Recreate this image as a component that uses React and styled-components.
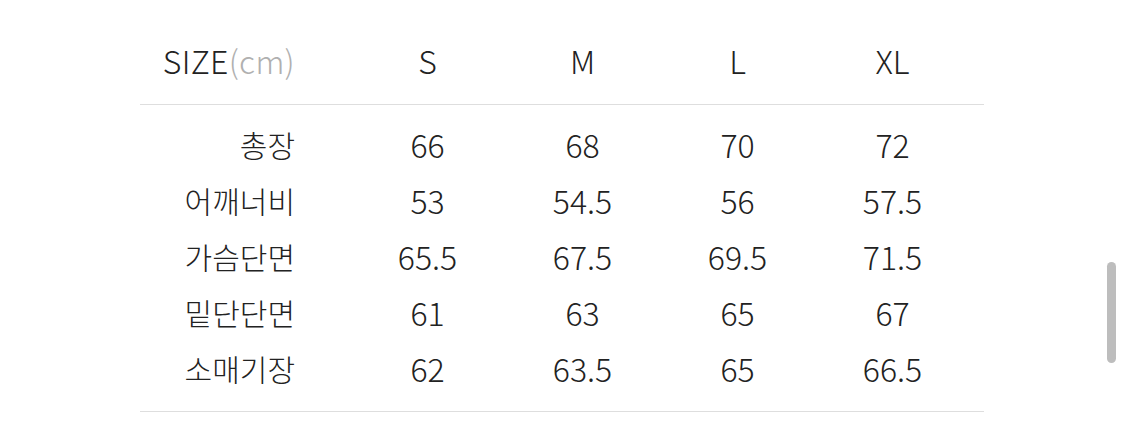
import styled, { createGlobalStyle } from "styled-components"

const GlobalStyle = createGlobalStyle`
    html, body {
        margin: 0;
        padding: 0;
        background: #ffffff;
    }
    body {
        font-family: "Noto Sans CJK KR", "Noto Sans", sans-serif;
        color: #222222;
    }
`

const sizes = ["S", "M", "L", "XL"]

const rows = [
    { label: "총장", values: ["66", "68", "70", "72"] },
    { label: "어깨너비", values: ["53", "54.5", "56", "57.5"] },
    { label: "가슴단면", values: ["65.5", "67.5", "69.5", "71.5"] },
    { label: "밑단단면", values: ["61", "63", "65", "67"] },
    { label: "소매기장", values: ["62", "63.5", "65", "66.5"] },
]

const App = () => {
    return (
        <Page>
            <GlobalStyle />
            <Table>
                <HeaderRow>
                    <LabelCell $head>
                        SIZE<Unit>(cm)</Unit>
                    </LabelCell>
                    {sizes.map(s => <ValueCell key={s}>{s}</ValueCell>)}
                </HeaderRow>
                <Body>
                    {rows.map(row => (
                        <Row key={row.label}>
                            <LabelCell>{row.label}</LabelCell>
                            {row.values.map((v, i) => <ValueCell key={i}>{v}</ValueCell>)}
                        </Row>
                    ))}
                </Body>
            </Table>
            <Scrollbar />
        </Page>
    )
}

const Page = styled.div`
    position: relative;
    width: 1125px;
    height: 427px;
    padding: 24px 0 0 140px;
    box-sizing: border-box;
    overflow: hidden;
`

const Table = styled.div`
    width: 844px;
`

const Row = styled.div`
    display: grid;
    grid-template-columns: 210px repeat(4, 155px) 1fr;
    align-items: center;
    height: 56px;
    line-height: 1;
`

const HeaderRow = styled(Row)`
    height: 81px;
    padding-bottom: 8px;
    box-sizing: border-box;
    border-bottom: 1px solid #dedede;
`

const Body = styled.div`
    padding: 11px 0 15px;
    border-bottom: 1px solid #dedede;
`

const LabelCell = styled.div`
    text-align: right;
    padding-right: 55px;
    font-size: ${p => p.$head ? "32px" : "30px"};
    font-weight: 300;
    letter-spacing: ${p => p.$head ? "0.3px" : "0"};
    white-space: nowrap;
`

const Unit = styled.span`
    color: #b0b0b0;
`

const ValueCell = styled.div`
    text-align: center;
    font-size: 32px;
    font-weight: 300;
`

const Scrollbar = styled.div`
    position: absolute;
    top: 262px;
    left: 1107px;
    width: 9px;
    height: 101px;
    border-radius: 5px;
    background: #bdbdbd;
`

export default App
